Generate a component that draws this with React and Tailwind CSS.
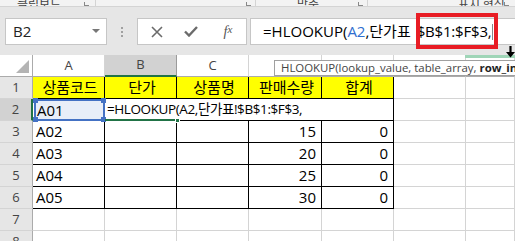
import React from "react";

const F = { fontFamily: '"Open Sans","Noto Sans CJK KR",sans-serif' };
const K = { fontFamily: '"Noto Sans CJK KR",sans-serif' };

const cols = ["A", "B", "C", "D", "E", "F", "G"];
const widths = ["w-[72px]", "w-[72px]", "w-[72px]", "w-[73px]", "w-[72px]", "w-[72px]", "w-[49px]"];

const rows = [
  { n: 1, cells: ["상품코드", "단가", "상품명", "판매수량", "합계"], head: true },
  { n: 2, cells: ["A01", "", "", "", ""] },
  { n: 3, cells: ["A02", "", "", "15", "0"] },
  { n: 4, cells: ["A03", "", "", "20", "0"] },
  { n: 5, cells: ["A04", "", "", "25", "0"] },
  { n: 6, cells: ["A05", "", "", "30", "0"] },
  { n: 7, cells: ["", "", "", "", ""], empty: true },
  { n: 8, cells: ["", "", "", "", ""], empty: true },
];

export default function App() {
  return (
    <div className="relative w-[515px] h-[241px] overflow-hidden bg-white text-black" style={F}>
      {/* ribbon remnant */}
      <div className="flex h-[7px] overflow-hidden bg-[#f3f3f3] border-b border-[#d4d4d4] text-[12px] text-[#444] leading-none">
        <div className="w-[96px] shrink-0 border-r border-[#d4d4d4] flex items-end pl-[17px] relative">
          <span className="-mb-[4px]" style={K}>클립보드</span>
          <span className="absolute right-[6px] bottom-0 w-[5px] h-[4px] border-l border-b border-[#888]"></span>
        </div>
        <div className="w-[160px] shrink-0 border-r border-[#d4d4d4] relative">
          <span className="absolute right-[4px] bottom-0 w-[5px] h-[4px] border-l border-b border-[#888]"></span>
        </div>
        <div className="w-[112px] shrink-0 border-r border-[#d4d4d4] flex items-end pl-[41px] relative">
          <span className="-mb-[4px]" style={K}>맞춤</span>
          <span className="absolute right-[4px] bottom-0 w-[5px] h-[4px] border-l border-b border-[#888]"></span>
        </div>
        <div className="flex-1 flex items-end pl-[90px] relative">
          <span className="-mb-[4px]" style={K}>표시 형식</span>
          <span className="absolute right-[6px] bottom-0 w-[5px] h-[4px] border-l border-b border-[#888]"></span>
        </div>
      </div>

      {/* formula bar */}
      <div className="flex h-[48px] bg-[#e6e6e6] pt-[11px]">
        <div className="ml-[5px] w-[102px] h-[27px] bg-white border border-[#c6c6c6] flex items-center pl-[7px] pr-[6px] text-[15px] text-[#222]">
          <span className="flex-1">B2</span>
          <svg width="8" height="5" viewBox="0 0 8 5"><path d="M0 0h8L4 4z" fill="#777" /></svg>
        </div>
        <div className="w-[30px] h-[27px] flex flex-col items-center justify-center gap-[2px]">
          <span className="w-[2px] h-[2px] bg-[#a0a0a0]"></span>
          <span className="w-[2px] h-[2px] bg-[#a0a0a0]"></span>
          <span className="w-[2px] h-[2px] bg-[#a0a0a0]"></span>
        </div>
        <div className="w-[110px] h-[27px] bg-white border border-[#c6c6c6] flex items-center">
          <div className="w-[38px] flex justify-center">
            <svg width="12" height="12" viewBox="0 0 12 12"><path d="M1 1L11 11M11 1L1 11" stroke="#6b6b6b" strokeWidth="1.6" /></svg>
          </div>
          <div className="w-[30px] flex justify-center">
            <svg width="14" height="11" viewBox="0 0 14 11"><path d="M1 5.5L5 9.5L13 1" stroke="#6b6b6b" strokeWidth="2.4" fill="none" /></svg>
          </div>
          <div className="flex-1 flex justify-center text-[14px] italic text-[#555] pl-[4px]" style={{ fontFamily: '"Liberation Serif",serif' }}>
            f<span className="text-[11px]">x</span>
          </div>
        </div>
        <div className="ml-[3px] flex-1 h-[27px] bg-white border border-r-0 border-[#c6c6c6] flex items-center pl-[12px] text-[15px] whitespace-nowrap">
          <span>=HLOOKUP(</span>
          <span className="text-[#2f6fd0]">A2</span>
          <span>,단가표</span>
          <span className="ml-[6px] tracking-[-0.2px]">$B$1:$F$3,</span>
          <span className="ml-[1px] w-[1px] h-[16px] bg-[#888]"></span>
        </div>
      </div>

      {/* grid */}
      <div className="flex flex-col">
        {/* column headers */}
        <div className="flex h-[22px]">
          <div className="w-[33px] bg-white border-r border-b border-[#ababab] relative">
            <svg className="absolute right-[3px] bottom-[3px]" width="13" height="13" viewBox="0 0 13 13"><path d="M13 0V13H0z" fill="#b4b4b4" /></svg>
          </div>
          {cols.map((c, i) => (
            <div
              key={c}
              className={`${widths[i]} shrink-0 flex items-center justify-center text-[13px] text-[#444] border-r ${
                c === "B" ? "bg-[#d2d2d2] border-b-2 border-b-[#217346] border-r-[#9b9b9b]" : "bg-white border-b border-[#ababab] border-r-[#d4d4d4]"
              }`}
            >
              {c}
            </div>
          ))}
        </div>
        {rows.map((r) => (
          <div key={r.n} className="flex h-[22px]">
            <div
              className={`w-[33px] shrink-0 flex items-center justify-center text-[13px] text-[#444] border-b border-[#d4d4d4] ${
                r.n === 2 ? "bg-[#d2d2d2] border-r-2 border-r-[#217346]" : "bg-[#e6e6e6] border-r border-r-[#ababab]"
              }`}
            >
              {r.n}
            </div>
            {cols.map((c, i) => {
              const inTable = i < 5 && !r.empty;
              const v = i < 5 ? r.cells[i] : "";
              return (
                <div
                  key={c}
                  className={`${widths[i]} shrink-0 flex items-center text-[15px] whitespace-nowrap ${
                    inTable ? "border-r border-b border-black" : "border-r border-b border-[#d4d4d4]"
                  } ${r.head && i < 5 ? "bg-[#ffff00] justify-center" : ""} ${
                    !r.head && (i === 3 || i === 4) ? "justify-end pr-[5px]" : "pl-[3px]"
                  }`}
                >
                  {r.head ? <span style={K}>{v}</span> : v}
                </div>
              );
            })}
          </div>
        ))}
      </div>

      {/* A2 range highlight */}
      <div className="absolute left-[34px] top-[99px] w-[71px] h-[22px] border-2 border-[#4472c4] bg-[#e8eef8] text-[15px] flex items-center pl-[1px]">
        A01
        <span className="absolute -left-[3px] -top-[3px] w-[5px] h-[5px] bg-[#4472c4]"></span>
        <span className="absolute -right-[3px] -top-[3px] w-[5px] h-[5px] bg-[#4472c4]"></span>
        <span className="absolute -left-[3px] -bottom-[3px] w-[5px] h-[5px] bg-[#4472c4]"></span>
        <span className="absolute -right-[3px] -bottom-[3px] w-[5px] h-[5px] bg-[#4472c4]"></span>
      </div>

      {/* B2 edit box */}
      <div className="absolute left-[106px] top-[99px] w-[287px] h-[21px] bg-white text-[13.5px] tracking-[-0.4px] flex items-center pl-[1px] whitespace-nowrap">
        =HLOOKUP(A2,단가표!$B$1:$F$3,
      </div>
      <div className="absolute left-[105px] top-[119px] w-[73px] h-[2px] bg-[#217346]"></div>
      <div className="absolute left-[175px] top-[118px] w-[5px] h-[5px] bg-[#217346] border border-white"></div>

      {/* red annotation box */}
      <div className="absolute left-[416px] top-[13px] w-[82px] h-[36px] border-[4px] border-[#e81c24]"></div>

      {/* green bar + cursor arrow */}
      <div className="absolute left-[465px] top-[55px] w-[50px] h-[3px] bg-[#9fd5b7]"></div>
      <svg className="absolute left-[505px] top-[46px]" width="11" height="12" viewBox="0 0 11 12">
        <path d="M5.5 0V9" stroke="#000" strokeWidth="2.2" />
        <path d="M1 6L5.5 11.5L10 6z" fill="#000" />
      </svg>

      {/* tooltip */}
      <div className="absolute left-[274px] top-[60px] h-[16px] pr-[10px] bg-white border border-[#a0a0a0] text-[11.4px] text-[#444] flex items-center pl-[6px] whitespace-nowrap leading-none">
        HLOOKUP(lookup_value, table_array, <b className="ml-[3px] text-[#222]">row_index_num</b>
      </div>
    </div>
  );
}
